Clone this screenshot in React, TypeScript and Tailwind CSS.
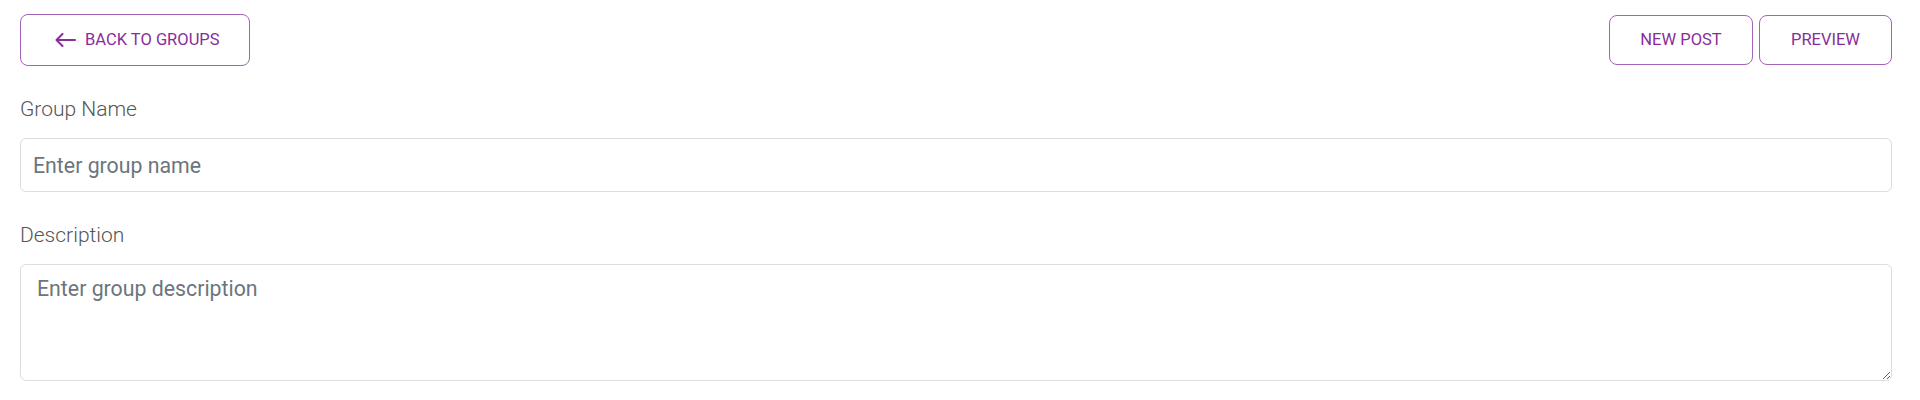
export default function App() {
  return (
    <div
      className="min-h-[400px] bg-white pl-[20px] pr-[28px] pt-[14px]"
      style={{ fontFamily: "Roboto, 'Liberation Sans', sans-serif" }}
    >
      {/* Top actions */}
      <div className="flex items-start justify-between">
        <button className="flex h-[52px] w-[230px] items-center gap-[9px] rounded-[8px] border border-[#a462b8] pl-[34px] text-[16.5px] text-[#8a2d9b]">
          <svg width="21" height="14" viewBox="0 0 21 14" fill="none" stroke="currentColor" strokeWidth="2" strokeLinecap="round" strokeLinejoin="round">
            <path d="M20 7H1.5M7.5 1L1.5 7l6 6" />
          </svg>
          <span>BACK TO GROUPS</span>
        </button>
        <div className="flex gap-[6px] pt-[1px]">
          <button className="h-[50px] w-[144px] rounded-[8px] border border-[#a462b8] text-[16.5px] text-[#8a2d9b]">
            NEW POST
          </button>
          <button className="h-[50px] w-[133px] rounded-[8px] border border-[#a462b8] text-[16.5px] text-[#8a2d9b]">
            PREVIEW
          </button>
        </div>
      </div>

      {/* Group name */}
      <label className="mt-[25px] block text-[21px] font-light leading-[36px] text-[#555]">
        Group Name
      </label>
      <input
        className="mt-[11px] block h-[54px] w-full rounded-[6px] border border-[#ddd] px-[12px] text-[21.3px] text-[#333] outline-none placeholder:text-[#6c757d]"
        placeholder="Enter group name"
      />

      {/* Description */}
      <label className="mt-[25px] block text-[21px] font-light leading-[36px] text-[#555]">
        Description
      </label>
      <textarea
        className="mt-[11px] block h-[117px] w-full rounded-[6px] border border-[#ddd] px-[16px] py-[8px] text-[21.3px] text-[#333] outline-none placeholder:text-[#6c757d]"
        placeholder="Enter group description"
      />
    </div>
  );
}
